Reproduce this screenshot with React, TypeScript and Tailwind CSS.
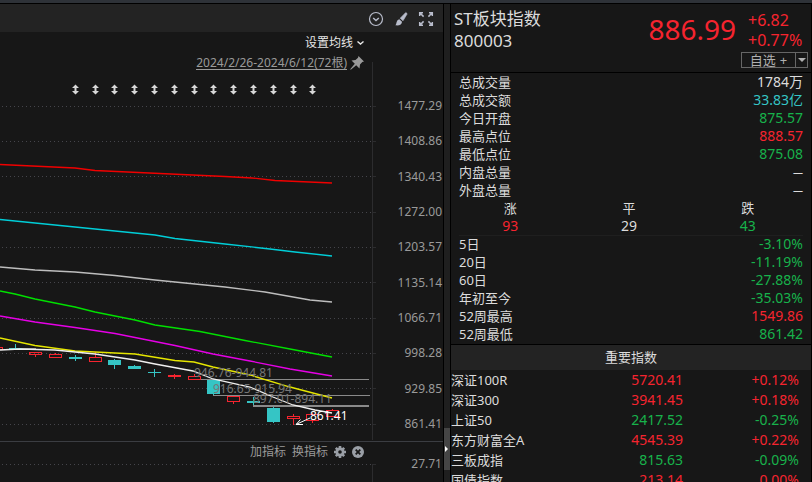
import React from "react";

const font = "font-['Noto_Sans','Noto_Sans_CJK_SC',sans-serif]";
const RED = "text-[#f5242f]";
const GREEN = "text-[#17b24b]";
const CYAN = "text-[#35c5c5]";
const WHITE = "text-[#dcdcdc]";

const stats = [
  { label: "总成交量", value: "1784万", tone: WHITE },
  { label: "总成交额", value: "33.83亿", tone: CYAN },
  { label: "今日开盘", value: "875.57", tone: GREEN },
  { label: "最高点位", value: "888.57", tone: RED },
  { label: "最低点位", value: "875.08", tone: GREEN },
  { label: "内盘总量", value: "—", tone: "text-[10px]" },
  { label: "外盘总量", value: "—", tone: "text-[10px]" },
];

const breadth = [
  { label: "涨", value: "93", tone: RED },
  { label: "平", value: "29", tone: WHITE },
  { label: "跌", value: "43", tone: GREEN },
];

const periods = [
  { label: "5日", value: "-3.10%", tone: GREEN },
  { label: "20日", value: "-11.19%", tone: GREEN },
  { label: "60日", value: "-27.88%", tone: GREEN },
  { label: "年初至今", value: "-35.03%", tone: GREEN },
  { label: "52周最高", value: "1549.86", tone: RED },
  { label: "52周最低", value: "861.42", tone: GREEN },
];

const indices = [
  { name: "深证100R", price: "5720.41", change: "+0.12%", tone: RED },
  { name: "深证300", price: "3941.45", change: "+0.18%", tone: RED },
  { name: "上证50", price: "2417.52", change: "-0.25%", tone: GREEN },
  { name: "东方财富全A", price: "4545.39", change: "+0.22%", tone: RED },
  { name: "三板成指", price: "815.63", change: "-0.09%", tone: GREEN },
  { name: "国债指数", price: "213.14", change: "0.00%", tone: RED },
];

const axis = ["1477.29", "1408.86", "1340.43", "1272.00", "1203.57", "1135.14", "1066.71", "998.28", "929.85", "861.41"];
const gridY = [106.5, 141.5, 176.5, 212.5, 247.5, 282.5, 318.5, 353.5, 388.5, 424.5];
const markers = [75.5, 95.5, 114.5, 134.5, 154.5, 174.5, 194.5, 213.5, 233.5, 253.5, 273.5, 293.5, 312.5];

const averages = [
  { color: "#f00000", points: "0,164.5 75,168 95,170.5 225,176.5 252,178 275,180.5 332,183" },
  { color: "#00ced8", points: "0,219.5 75,227 155,235 175,238.5 225,244 270,249 295,252 332,256" },
  { color: "#bdbdbd", points: "0,267 35,270 75,272 115,275.5 155,280 225,287 265,292 310,300 332,302" },
  { color: "#00e000", points: "0,291 15,294 35,299 75,307 95,312 135,320 155,325 200,331.5 245,340.5 290,349 332,357" },
  { color: "#e600e6", points: "0,316 35,322 75,327.5 115,333.5 150,340.5 175,345.5 213,354 250,361 290,369 332,376" },
  { color: "#e6e600", points: "0,338 35,345.5 75,351 135,354 175,360.5 194,362 213,367 250,375 290,387 332,398" },
  { color: "#f0f0f0", points: "0,350 20,349 55,350 95,354 135,360 155,364 193,371 213,379 250,387 273,397 293,405 315,410 332,413" },
];

type Candle = { x: number; top: number; bottom: number; high: number; low: number; kind: "up" | "down" | "flat" };

const candles: Candle[] = [
  { x: -4, top: 347, bottom: 350, high: 347, low: 350, kind: "up" },
  { x: 15, top: 348, bottom: 350, high: 344, low: 350, kind: "down" },
  { x: 35, top: 352, bottom: 355, high: 352, low: 357, kind: "up" },
  { x: 55, top: 354, bottom: 358, high: 353, low: 358, kind: "up" },
  { x: 75, top: 357, bottom: 359, high: 355, low: 361, kind: "down" },
  { x: 95, top: 357, bottom: 362, high: 352, low: 362, kind: "up" },
  { x: 114, top: 360, bottom: 365, high: 359, low: 369, kind: "down" },
  { x: 134, top: 366, bottom: 369, high: 365, low: 369, kind: "down" },
  { x: 154, top: 372, bottom: 373, high: 369, low: 377, kind: "down" },
  { x: 174, top: 375, bottom: 377, high: 374, low: 379, kind: "flat" },
  { x: 194, top: 376, bottom: 380, high: 374, low: 380, kind: "up" },
  { x: 213, top: 380, bottom: 394, high: 380, low: 395, kind: "down" },
  { x: 233, top: 396, bottom: 402, high: 395, low: 404, kind: "up" },
  { x: 253, top: 401, bottom: 403, high: 397, low: 406, kind: "down" },
  { x: 273, top: 408, bottom: 422, high: 407, low: 423, kind: "down" },
  { x: 293, top: 416, bottom: 419, high: 414, low: 425, kind: "up" },
  { x: 312, top: 414, bottom: 421, high: 413, low: 423, kind: "up" },
  { x: 332, top: 410, bottom: 417, high: 409, low: 417, kind: "up" },
];

function CandleShape({ x, top, bottom, high, low, kind }: Candle) {
  const color = kind === "down" ? "#35c5c5" : "#f5242f";
  return (
    <g shapeRendering="crispEdges">
      <rect x={x} y={high} width={1} height={top - high} fill={color} />
      <rect x={x} y={bottom} width={1} height={low - bottom} fill={color} />
      {kind === "up" ? (
        <rect x={x - 5.5} y={top + 0.5} width={12} height={bottom - top - 1} fill="none" stroke={color} />
      ) : (
        <rect x={x - 6} y={top} width={13} height={bottom - top} fill={color} />
      )}
    </g>
  );
}

function PriceChart() {
  return (
    <svg viewBox="0 73 376 368" className="block h-[368px] w-[376px] shrink-0 overflow-visible text-[12px]" role="img" aria-label="ST板块指数">
      <path d="M372.5 62V440" stroke="#2c2c2e" />
      {gridY.map((y) => (
        <g key={y}>
          <path d={`M2 ${y}H372`} stroke="#45454b" strokeDasharray="1 3" />
          <path d={`M373 ${y}H376`} stroke="#2c2c2e" />
        </g>
      ))}
      {markers.map((x) => (
        <path key={x} transform={`translate(${x} 89.5)`} d="M0-5 3.500-1.500H1V1.500H3.500L0 5-3.500 1.500H-1V-1.500H-3.500Z" fill="#d8d8d8" />
      ))}
      {candles.map((c) => (
        <CandleShape key={c.x} {...c} />
      ))}
      <g fill="#8a8a8a" shapeRendering="crispEdges">
        <rect x="201" y="379" width="168" height="1" />
        <rect x="213" y="395" width="157" height="1" />
        <rect x="253" y="405" width="116" height="2" />
        <rect x="22" y="348" width="14" height="2" />
      </g>
      {averages.map((a) => (
        <polyline key={a.color} points={a.points} fill="none" stroke={a.color} strokeWidth="1.3" />
      ))}
      <g fill="#777777">
        <text x="194" y="377">946.76-944.81</text>
        <text x="213" y="393">916.65-915.94</text>
        <text x="253" y="403">897.01-894.11</text>
      </g>
      <path d="M310 418 296 424.5M300.500 419.500 296 424.500 303 424.500" fill="none" stroke="#fff" />
      <text x="310" y="420" fill="#fff">861.41</text>
    </svg>
  );
}

function ChartPanel() {
  return (
    <section className="flex min-w-0 flex-1 flex-col border-r border-black">
      <div className="flex h-7 shrink-0 items-center justify-end gap-[9px] bg-[#232323] pt-px pr-[9px] text-[#b8bccb]">
        <button aria-label="展开" className="size-4">
          <svg viewBox="0 0 16 16" className="size-4" fill="none" stroke="currentColor" strokeWidth="1.2">
            <circle cx="8" cy="8" r="6.500" />
            <path d="M5.200 7 8 9.500 10.800 7" strokeWidth="1.500" />
          </svg>
        </button>
        <button aria-label="画线" className="size-4">
          <svg viewBox="0 0 16 16" className="size-4" fill="currentColor">
            <path d="M12.800 1.500 14.200 2.800 10 9.800 7.200 7.200Z" stroke="currentColor" strokeWidth=".6" />
            <path d="M6.300 8.200 9 10.700C9 13.600 6.500 14.800 2.300 14.300 4 13 3 9 6.300 8.200Z" />
          </svg>
        </button>
        <button aria-label="全屏" className="size-4">
          <svg viewBox="0 0 16 16" className="size-4" fill="none" stroke="currentColor" strokeWidth="1.5">
            <path d="M1.700 5V1.700H5M11 1.700H14.300V5M14.300 11V14.300H11M5 14.300H1.700V11M2 2 5.600 5.600M14 2 10.400 5.600M14 14 10.400 10.400M2 14 5.600 10.400" />
          </svg>
        </button>
      </div>
      <div className="flex shrink-0 border-b border-[#3b3d42]">
        <div className="flex min-w-0 flex-1 flex-col items-end pt-px">
          <button className="flex h-5 items-center gap-1 pr-3 text-[12px] text-[#e6e6e6]">
            设置均线
            <svg viewBox="0 0 7 4" className="h-1 w-[7px]" fill="none" stroke="currentColor" strokeWidth="1.4">
              <path d="M.5.5 3.500 3 6.500.5" />
            </svg>
          </button>
          <div className="flex h-5 items-center gap-[3px] pr-3 text-[#9a9a9a]">
            <a href="#range" className="border-b border-[#9a9a9a] text-[12px] leading-[13px]">2024/2/26-2024/6/12(72根)</a>
            <svg viewBox="0 0 14 14" className="size-[14px]" fill="currentColor">
              <path d="M8.500 0 14 5.500 12.300 6 10 8.500 9.500 12.500 6.200 9.200 .8 13.800 .2 13.200 4.800 7.800 1.500 4.500 5.500 4 8 1.700Z" />
            </svg>
          </div>
          <PriceChart />
        </div>
        <div className="flex w-[67px] shrink-0 flex-col justify-between pt-[66px] pr-px pb-[9px] text-right text-[12px] leading-4 text-[#9a9a9a]">
          {axis.map((v) => (
            <span key={v}>{v}</span>
          ))}
        </div>
      </div>
      <div className="flex min-h-0 flex-1">
        <div className="flex min-w-0 flex-1 flex-col items-end">
          <div className="flex h-5 shrink-0 items-center gap-[6px] pr-3 text-[12px] text-[#9a9a9a]">
            <button>加指标</button>
            <button>换指标</button>
            <button aria-label="设置" className="size-3">
              <svg viewBox="0 0 12 12" className="size-3">
                <g stroke="#9a9fa6" strokeWidth="2.600">
                  <path d="M6 0V12M0 6H12M1.800 1.800 10.200 10.200M10.200 1.800 1.800 10.200" />
                </g>
                <circle cx="6" cy="6" r="4.500" fill="#9a9fa6" />
                <circle cx="6" cy="6" r="1.800" fill="#171717" />
              </svg>
            </button>
            <button aria-label="关闭" className="size-3">
              <svg viewBox="0 0 12 12" className="size-3">
                <circle cx="6" cy="6" r="6" fill="#9a9fa6" />
                <path d="M3.700 3.700 8.300 8.300M8.300 3.700 3.700 8.300" stroke="#171717" strokeWidth="1.800" />
              </svg>
            </button>
          </div>
          <svg viewBox="0 462 376 20" className="h-5 w-[376px] shrink-0">
            <path d="M2 464.500H372" stroke="#45454b" strokeDasharray="1 3" />
            <path d="M372.500 464V482M373 464.500H376" stroke="#2c2c2e" fill="none" />
          </svg>
        </div>
        <div className="w-[67px] shrink-0 pt-[14px] pr-px text-right text-[12px] leading-4 text-[#9a9a9a]">27.71</div>
      </div>
    </section>
  );
}

function StatRow({ label, value, tone }: { label: string; value: string; tone: string }) {
  return (
    <div className="flex h-[18px] items-center justify-between">
      <dt className="text-[13px]">{label}</dt>
      <dd className={`pb-[2px] leading-4 ${tone}`}>{value}</dd>
    </div>
  );
}

function QuotePanel() {
  return (
    <aside className="flex w-[362px] shrink-0 flex-col overflow-hidden border-x border-black text-[14px] text-[#dcdcdc]">
      <header className="flex h-[69px] shrink-0 justify-between border-b border-black pr-[3px] pl-[3px]">
        <div className="pt-1 text-[17px] leading-[22px]">
          <h1>ST板块指数</h1>
          <p>800003</p>
        </div>
        <div className={`flex gap-3 ${RED}`}>
          <strong className="pt-[5px] text-[28px] leading-10 font-normal">886.99</strong>
          <div className="flex flex-col items-end">
            <div className="w-[60px] pt-[6px] text-[16px] leading-5">
              <p>+6.82</p>
              <p>+0.77%</p>
            </div>
            <div className="mt-[2px] -ml-4 flex h-4 w-[67px] border border-[#666] text-[13px] leading-[14px] text-[#b0b0b0]">
              <button className="flex flex-1 items-center justify-center gap-1">
                <span>自选</span>
                <span>+</span>
              </button>
              <button aria-label="更多" className="flex w-3 items-center justify-center border-l border-[#666]">
                <svg viewBox="0 0 8 4" className="h-1 w-2" fill="currentColor">
                  <path d="M0 0H8L4 4Z" />
                </svg>
              </button>
            </div>
          </div>
        </div>
      </header>
      <dl className="shrink-0 px-2 pt-px">
        {stats.map((s) => (
          <StatRow key={s.label} {...s} />
        ))}
      </dl>
      <dl className="mr-1 grid h-[35px] shrink-0 grid-cols-3 text-center leading-[18px]">
        {breadth.map((b) => (
          <div key={b.label}>
            <dt className="text-[13px] leading-[17px]">{b.label}</dt>
            <dd className={b.tone}>{b.value}</dd>
          </div>
        ))}
      </dl>
      <dl className="mx-2 shrink-0 border-t border-[#1f1f1f]">
        {periods.map((s) => (
          <StatRow key={s.label} {...s} />
        ))}
      </dl>
      <h2 className="flex h-[26px] shrink-0 items-center justify-center border-t border-black bg-[#232323] text-[13px]">重要指数</h2>
      <table className="w-full table-fixed border-collapse">
        <tbody>
          {indices.map((r) => (
            <tr key={r.name} className="h-5 leading-5">
              <td className="w-[120px] p-0 text-[13px] whitespace-nowrap">{r.name}</td>
              <td className={`p-0 text-right ${r.tone}`}>{r.price}</td>
              <td className={`w-[128px] p-0 pr-3 text-right ${r.tone}`}>{r.change}</td>
            </tr>
          ))}
        </tbody>
      </table>
    </aside>
  );
}

export default function App() {
  return (
    <main className={`flex h-screen flex-col overflow-hidden bg-[#171717] ${font}`}>
      <div className="h-1 shrink-0 border-b border-black bg-[#2e3238]" />
      <div className="flex min-h-0 flex-1">
        <ChartPanel />
        <div className="flex w-[6px] shrink-0 flex-col bg-[#1f1f1f] pt-[424px]">
          <button aria-label="收起侧栏" className="flex h-[42px] w-full items-center bg-[#454545] pl-px">
            <svg viewBox="0 0 3 6" className="h-[6px] w-[3px]" fill="#fff">
              <path d="M0 0 3 3 0 6Z" />
            </svg>
          </button>
        </div>
        <QuotePanel />
      </div>
    </main>
  );
}
